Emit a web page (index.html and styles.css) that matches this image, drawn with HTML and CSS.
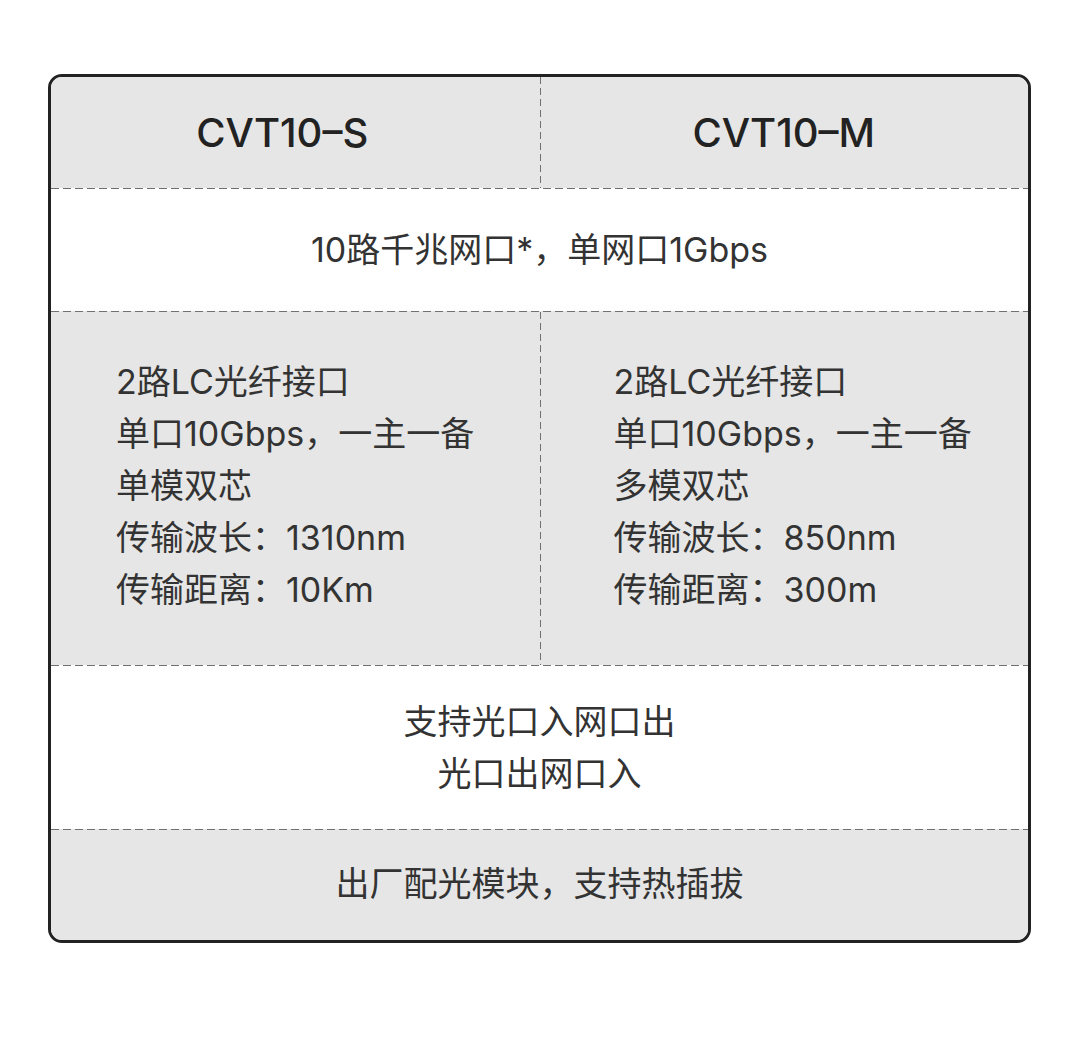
FILE: index.html
```html
<!DOCTYPE html>
<html lang="zh-CN">
<head>
<meta charset="utf-8">
<title>CVT10 规格</title>
<link rel="stylesheet" href="styles.css">
</head>
<body>
<div class="page">
  <div class="table">
    <div class="row row-head grey">
      <div class="cell half head head-left">CVT10–S</div>
      <div class="cell half head vline">CVT10–M</div>
    </div>
    <div class="row row-net white dash">
      <div class="cell full">10路千兆网口*，单网口1Gbps</div>
    </div>
    <div class="row row-fiber grey dash">
      <div class="cell half list left">
        <div>2路LC光纤接口</div>
        <div>单口10Gbps，一主一备</div>
        <div>单模双芯</div>
        <div>传输波长：1310nm</div>
        <div>传输距离：10Km</div>
      </div>
      <div class="cell half list right vline">
        <div>2路LC光纤接口</div>
        <div>单口10Gbps，一主一备</div>
        <div>多模双芯</div>
        <div>传输波长：850nm</div>
        <div>传输距离：300m</div>
      </div>
    </div>
    <div class="row row-mode white dash">
      <div class="cell full lines">
        <div>支持光口入网口出</div>
        <div>光口出网口入</div>
      </div>
    </div>
    <div class="row row-module grey dash">
      <div class="cell full module">出厂配光模块，支持热插拔</div>
    </div>
  </div>
</div>
</body>
</html>
```

FILE: styles.css
```css
html, body {
  margin: 0;
  padding: 0;
  background: #ffffff;
}

body {
  font-family: "Inter", "Noto Sans CJK SC", "Noto Sans", sans-serif;
  color: #333333;
}

.page {
  width: 1080px;
  height: 1041px;
  padding: 74px 0 0 48px;
  box-sizing: border-box;
}

.table {
  width: 983px;
  border: 3px solid #222222;
  border-radius: 14px;
  overflow: hidden;
  box-sizing: border-box;
  display: flex;
  flex-direction: column;
}

.row {
  display: flex;
  box-sizing: border-box;
}

.grey { background-color: #e6e6e6; }
.white { background-color: #ffffff; }

.dash {
  background-image: linear-gradient(to right, #707070 8px, transparent 8px);
  background-size: 12px 1px;
  background-repeat: repeat-x;
  background-position: 0 0;
  padding-top: 1px;
}

.row-head { height: 111px; }
.row-net { height: 123px; }
.row-fiber { height: 354px; }
.row-mode { height: 164px; }
.row-module { height: 111px; }

.cell {
  display: flex;
  align-items: center;
  justify-content: center;
  box-sizing: border-box;
  font-size: 34px;
  line-height: 52px;
}

.half {
  flex: 0 0 50%;
}

.full {
  flex: 1 1 auto;
  text-align: center;
}

.vline {
  background-image: linear-gradient(to bottom, #707070 7px, transparent 7px);
  background-size: 1px 11px;
  background-repeat: repeat-y;
  background-position: 0 0;
}

.head {
  font-size: 40px;
  font-weight: 500;
  color: #222222;
}

.head-left {
  padding-right: 26px;
}

.lines {
  flex-direction: column;
}

.list {
  flex-direction: column;
  align-items: flex-start;
  justify-content: center;
  padding-bottom: 5px;
}

.module {
  padding-bottom: 3px;
}

.list.left { padding-left: 65px; }
.list.right { padding-left: 74px; }
```
